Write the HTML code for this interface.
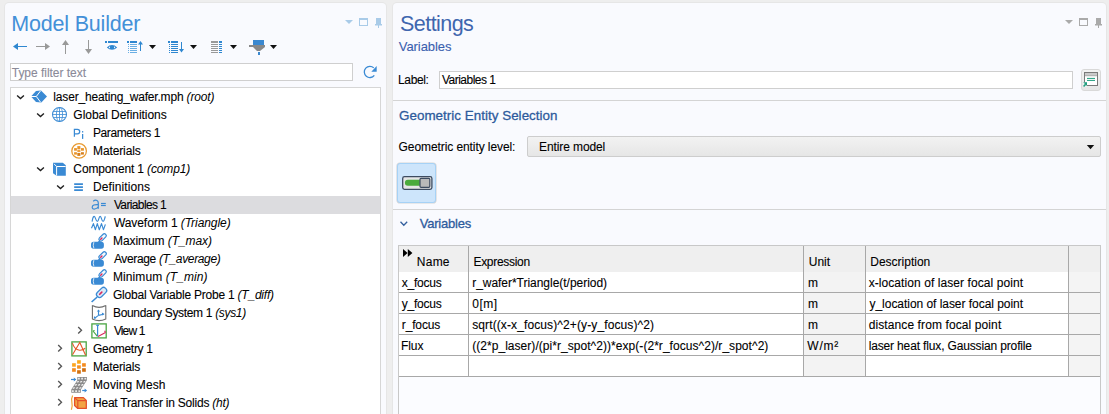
<!DOCTYPE html>
<html><head><meta charset="utf-8">
<style>
*{margin:0;padding:0;box-sizing:border-box}
html,body{width:1109px;height:414px;overflow:hidden;background:#eeeeee;font-family:"Liberation Sans",sans-serif;font-size:12px;color:#000}
.a{position:absolute}
.panel{position:absolute;background:#f9fafe;border-radius:4px 4px 0 0;box-shadow:0 0 0 1px #e6e6e6}
.t{position:absolute;white-space:nowrap;line-height:14px;-webkit-text-stroke:0.1px currentColor}
.ttl{position:absolute;white-space:nowrap;font-size:21px;line-height:24px}
svg{position:absolute;overflow:visible}
.row{position:absolute;left:0;width:369px;height:18px}
.row .t{top:2px}
.sel{background:#dcdcdf}
i{font-style:italic;-webkit-text-stroke:0}
.grid{position:absolute;background:#a6a6a6}
</style></head><body>

<!-- LEFT PANEL -->
<div class="panel" style="left:5px;top:3px;width:381px;height:420px"></div>
<!-- panel controls -->
<svg style="left:0;top:0" width="1109" height="60">
 <g fill="#a9cbe8">
  <polygon points="345,20 353,20 349,24"/>
  <path d="M359,18h9v8h-9z M360,20v5h7v-5z" fill-rule="evenodd"/>
  <rect x="376" y="18" width="5" height="6"/><rect x="375" y="24" width="7" height="1.5"/><rect x="378" y="25" width="1" height="3"/>
 </g>

 <!-- toolbar -->
 <g fill="#2f87d0" stroke="none">
  <polygon points="13,46.5 18,43 18,50"/><rect x="17" y="46" width="10" height="1"/>
 </g>
 <g fill="#999">
  <polygon points="50,46.5 45,43 45,50"/><rect x="36" y="46" width="10" height="1"/>
  <polygon points="65.5,40 62,45 69,45"/><rect x="65" y="44" width="1" height="10"/>
  <polygon points="88.5,54 85,49 92,49"/><rect x="88" y="40" width="1" height="10"/>
 </g>
 <!-- eye -->
 <g fill="#2f87d0">
  <rect x="105" y="41" width="2" height="2"/><rect x="108" y="41" width="10" height="2"/>
  <path d="M106.8,47.4 Q112,42.6 117.2,47.4 Q112,52.2 106.8,47.4z"/><g fill="#f8f9fd"><polygon points="108.6,47.4 110,46.3 110,48.5"/><polygon points="115.4,47.4 114,46.3 114,48.5"/></g>
 </g>
 <!-- list up -->
 <g fill="#2f87d0">
  <rect x="127" y="41" width="2" height="2"/><rect x="130" y="41" width="7" height="2"/>
 </g>
 <g fill="#6aaee3">
  <rect x="128" y="44" width="1" height="1"/><rect x="130" y="44" width="7" height="1"/>
  <rect x="128" y="46" width="1" height="1"/><rect x="130" y="46" width="7" height="1"/>
  <rect x="128" y="48" width="1" height="1"/><rect x="130" y="48" width="7" height="1"/>
  <rect x="128" y="50" width="1" height="1"/><rect x="130" y="50" width="7" height="1"/>
  <rect x="128" y="52" width="1" height="1"/><rect x="130" y="52" width="7" height="1"/>
 </g>
 <g fill="#2f87d0"><polygon points="140.5,41 138,44.5 143,44.5"/><rect x="140" y="44" width="1" height="7"/></g>
 <polygon points="149,45 156,45 152.5,49" fill="#111"/>
 <!-- list down -->
 <g fill="#2f87d0">
  <rect x="168" y="41" width="2" height="2"/><rect x="171" y="41" width="7" height="2"/>
  <rect x="169" y="44" width="1" height="1"/><rect x="171" y="44" width="7" height="1"/>
  <rect x="169" y="46" width="1" height="1"/><rect x="171" y="46" width="7" height="1"/>
  <rect x="169" y="48" width="1" height="1"/><rect x="171" y="48" width="7" height="1"/>
  <rect x="169" y="50" width="1" height="1"/><rect x="171" y="50" width="7" height="1"/>
  <rect x="169" y="52" width="1" height="1"/><rect x="171" y="52" width="7" height="1"/>
  <polygon points="181.5,52.5 179,49 184,49"/><rect x="181" y="42" width="1" height="8"/>
 </g>
 <polygon points="190,45 197,45 193.5,49" fill="#111"/>
 <!-- grid -->
 <g fill="#999">
  <rect x="211" y="41" width="7" height="2"/><rect x="211" y="44" width="7" height="1"/><rect x="211" y="46" width="7" height="1"/><rect x="211" y="48" width="7" height="1"/><rect x="211" y="50" width="7" height="1"/><rect x="211" y="52" width="7" height="1"/>
 </g>
 <g fill="#2f87d0">
  <rect x="219" y="41" width="3" height="2"/><rect x="219" y="44" width="3" height="1"/><rect x="219" y="46" width="3" height="1"/><rect x="219" y="48" width="3" height="1"/><rect x="219" y="50" width="3" height="1"/><rect x="219" y="52" width="3" height="1"/>
 </g>
 <polygon points="230,45 237,45 233.5,49" fill="#111"/>
 <!-- funnel -->
 <rect x="253" y="40" width="11" height="5" fill="#3a88d0"/>
 <polygon points="249,45 265,45 265,47 260,51 257,51 253,47 249,47" fill="#888"/>
 <rect x="258" y="52" width="2" height="3" fill="#3a88d0"/>
 <polygon points="270,45 277,45 273.5,49" fill="#111"/>
</svg>

<!-- filter box -->
<div class="a" style="left:10px;top:63px;width:343px;height:18px;background:#fff;border:1px solid #cfcfcf"></div>
<svg style="left:356px;top:60px" width="30" height="24" viewBox="0 0 30 24">
 <path d="M18.3,15.4 A5.6,5.6 0 1,1 17.8,7.9" fill="none" stroke="#3a8ad4" stroke-width="1.3"/>
 <polygon points="15.3,11.7 20.7,11.7 20.7,6.1" fill="#3a8ad4"/>
</svg>

<!-- tree -->
<div class="a" style="left:10px;top:87px;width:371px;height:340px;background:#fff;border:1px solid #d6d6d6;overflow:hidden">
 
</div>

<div class="a sel" style="left:11px;top:196px;width:369px;height:18px"></div>
<svg style="left:8px;top:88px" width="24" height="18" viewBox="0 0 24 18"><polyline points="9.1,7.4 12.5,10.6 15.9,7.4" fill="none" stroke="#1e1e1e" stroke-width="1.35"/></svg>
<svg style="left:28px;top:88px" width="24" height="18" viewBox="0 0 24 18"><polygon points="3,8.5 8,3 13,2.6 19,8.5 13.3,14.6 8,14.1" fill="#3a8ad4"/>
<polyline points="3,8.5 8.3,8.5 12.6,2.8" fill="none" stroke="#fff" stroke-width="1"/><line x1="8.3" y1="8.5" x2="12.6" y2="14.2" stroke="#fff" stroke-width="1"/></svg>
<svg style="left:28px;top:106px" width="24" height="18" viewBox="0 0 24 18"><polyline points="9.1,7.4 12.5,10.6 15.9,7.4" fill="none" stroke="#1e1e1e" stroke-width="1.35"/></svg>
<svg style="left:48px;top:106px" width="24" height="18" viewBox="0 0 24 18"><defs><clipPath id="gc"><circle cx="11.5" cy="8.5" r="7"/></clipPath></defs><g fill="none" stroke="#3a8ad4" stroke-width="0.8">
<circle cx="11.5" cy="8.5" r="7" stroke-width="1.05"/><g clip-path="url(#gc)"><ellipse cx="11.5" cy="8.5" rx="3.1" ry="7.2"/>
<line x1="11.5" y1="1" x2="11.5" y2="16"/><line x1="3" y1="5.5" x2="20" y2="5.5"/><line x1="3" y1="8.5" x2="20" y2="8.5"/><line x1="3" y1="11.5" x2="20" y2="11.5"/></g></g></svg>
<svg style="left:68px;top:124px" width="24" height="18" viewBox="0 0 24 18"><path d="M6.4,12.8V5.3h3a2.3,2.25 0 0,1 0,4.5h-3" fill="none" stroke="#3a8ad4" stroke-width="1.25"/>
<rect x="14" y="7.1" width="1.25" height="1.4" fill="#3a8ad4"/><rect x="14" y="10" width="1.25" height="4.9" fill="#3a8ad4"/></svg>
<svg style="left:68px;top:142px" width="24" height="18" viewBox="0 0 24 18"><circle cx="11.1" cy="8.9" r="7.3" fill="#fff" stroke="#e89a30" stroke-width="1.25"/>
<g fill="#e8942a"><rect x="9.3" y="4.1" width="3.1" height="2.9"/><rect x="6.1" y="6.1" width="2.8" height="2.6"/><rect x="13" y="6.1" width="2.9" height="2.6"/>
<rect x="9.3" y="7.6" width="3.1" height="2.4" fill="#eea040"/><rect x="6.1" y="10.2" width="2.8" height="2.4"/><rect x="13" y="10.2" width="2.9" height="2.4" fill="#d8801c"/><rect x="9.3" y="10.9" width="3.1" height="3" fill="#d8801c"/></g></svg>
<svg style="left:28px;top:160px" width="24" height="18" viewBox="0 0 24 18"><polyline points="9.1,7.4 12.5,10.6 15.9,7.4" fill="none" stroke="#1e1e1e" stroke-width="1.35"/></svg>
<svg style="left:48px;top:160px" width="24" height="18" viewBox="0 0 24 18"><polygon points="5,2.8 14.8,2.8 17.8,5.3 17.8,15.7 8.5,15.7 5,13.2" fill="#3a8ad4"/>
<path d="M6,3.8 L8.6,6.5 H17.6 M8.6,6.5 V15.6" fill="none" stroke="#fff" stroke-width="1"/></svg>
<svg style="left:48px;top:178px" width="24" height="18" viewBox="0 0 24 18"><polyline points="9.1,7.4 12.5,10.6 15.9,7.4" fill="none" stroke="#1e1e1e" stroke-width="1.35"/></svg>
<svg style="left:68px;top:178px" width="24" height="18" viewBox="0 0 24 18"><g fill="#3a8ad4"><rect x="6.1" y="5.2" width="8.9" height="1.7" rx="0.4"/><rect x="6.1" y="8.2" width="8.9" height="1.7" rx="0.4"/><rect x="6.1" y="11.2" width="8.9" height="1.7" rx="0.4"/></g></svg>
<svg style="left:88px;top:196px" width="24" height="18" viewBox="0 0 24 18"><path d="M5.2,5.2 Q7.2,3.6 9,4.5 Q10.3,5.2 10.3,7 V12.8 M10.3,8.6 Q4.3,8.2 4.2,11.2 Q4.4,13.3 6.8,13 Q9.5,12.6 10.3,10.6" fill="none" stroke="#3a8ad4" stroke-width="1.2"/>
<rect x="13" y="6.9" width="4.8" height="1.2" fill="#3a8ad4"/><rect x="13" y="8.9" width="4.8" height="1.2" fill="#3a8ad4"/></svg>
<svg style="left:88px;top:214px" width="24" height="18" viewBox="0 0 24 18"><path d="M4.1,7.6 C4.6,5 4.8,2.4 6.2,2.4 C7.6,2.4 7.6,7.4 9.4,7.4 C10.8,7.4 10.6,2.4 12.2,2.4 C13.6,2.4 13.4,7.4 15.1,7.4 C16.4,7.4 16.6,3.6 17.4,2.4" fill="none" stroke="#3a8ad4" stroke-width="1.15"/>
<polyline points="3.5,14.3 5.4,9.6 7.4,15.7 9.3,9.6 11.3,15.7 13.5,9.6 15.4,15.7 17.4,10.4" fill="none" stroke="#3a8ad4" stroke-width="1.15" stroke-linejoin="round"/></svg>
<svg style="left:88px;top:232px" width="24" height="18" viewBox="0 0 24 18"><rect x="3" y="9.8" width="12.9" height="6.9" rx="2.6" fill="#3a8ad4"/>
<path d="M5.9,10.1 Q4.6,13.2 5.9,16.4" fill="none" stroke="#e4eef8" stroke-width="0.9"/>
<line x1="9.2" y1="11.8" x2="12.2" y2="8.6" stroke="#3a8ad4" stroke-width="1.7"/>
<g transform="rotate(45 14.6 5.4)"><rect x="12.7" y="1.1" width="3.8" height="8.6" rx="1.7" fill="#f2f7fc" stroke="#3a8ad4" stroke-width="1.2"/>
<rect x="13.85" y="5.6" width="1.5" height="3.2" rx="0.75" fill="#d8265a"/></g></svg>
<svg style="left:88px;top:250px" width="24" height="18" viewBox="0 0 24 18"><rect x="3" y="9.8" width="12.9" height="6.9" rx="2.6" fill="#3a8ad4"/>
<path d="M5.9,10.1 Q4.6,13.2 5.9,16.4" fill="none" stroke="#e4eef8" stroke-width="0.9"/>
<line x1="9.2" y1="11.8" x2="12.2" y2="8.6" stroke="#3a8ad4" stroke-width="1.7"/>
<g transform="rotate(45 14.6 5.4)"><rect x="12.7" y="1.1" width="3.8" height="8.6" rx="1.7" fill="#f2f7fc" stroke="#3a8ad4" stroke-width="1.2"/>
<rect x="13.85" y="5.6" width="1.5" height="3.2" rx="0.75" fill="#d8265a"/></g></svg>
<svg style="left:88px;top:268px" width="24" height="18" viewBox="0 0 24 18"><rect x="3" y="9.8" width="12.9" height="6.9" rx="2.6" fill="#3a8ad4"/>
<path d="M5.9,10.1 Q4.6,13.2 5.9,16.4" fill="none" stroke="#e4eef8" stroke-width="0.9"/>
<line x1="9.2" y1="11.8" x2="12.2" y2="8.6" stroke="#3a8ad4" stroke-width="1.7"/>
<g transform="rotate(45 14.6 5.4)"><rect x="12.7" y="1.1" width="3.8" height="8.6" rx="1.7" fill="#f2f7fc" stroke="#3a8ad4" stroke-width="1.2"/>
<rect x="13.85" y="5.6" width="1.5" height="3.2" rx="0.75" fill="#d8265a"/></g></svg>
<svg style="left:88px;top:286px" width="24" height="18" viewBox="0 0 24 18"><g transform="rotate(45 13.4 6.6)"><rect x="10.4" y="0.6" width="6" height="11.5" rx="2.6" fill="#dbe9f7" stroke="#3a8ad4" stroke-width="1.25"/>
<rect x="12.6" y="5.2" width="1.6" height="4.6" rx="0.8" fill="#d8265a"/></g>
<line x1="3.6" y1="16" x2="9.2" y2="11" stroke="#3a8ad4" stroke-width="1.6"/></svg>
<svg style="left:88px;top:304px" width="24" height="18" viewBox="0 0 24 18"><path d="M4.4,1.2 V15 Q11,18.2 17.8,15 V1.2 M4.4,1.6 Q11,5.2 17.8,1.6" fill="none" stroke="#6e6e6e" stroke-width="1.1"/>
<g stroke="#3a8ad4" stroke-width="1.15" fill="none"><line x1="10.5" y1="6.6" x2="10.5" y2="11.4"/><polyline points="10.5,11.4 15.5,10.2"/><polyline points="10.5,11.4 6.6,14.2"/></g>
<g fill="#3a8ad4"><polygon points="10.5,5.6 8.8,7.6 12.2,7.6"/><polygon points="16.6,10 13.8,8.6 14.4,11.6"/><polygon points="5.8,14.8 6,12 8.2,14.2"/></g></svg>
<svg style="left:68px;top:322px" width="24" height="18" viewBox="0 0 24 18"><polyline points="10.2,5.1 13.5,8.3 10.2,11.5" fill="none" stroke="#555" stroke-width="1.35"/></svg>
<svg style="left:88px;top:322px" width="24" height="18" viewBox="0 0 24 18"><rect x="3.9" y="1.9" width="14.3" height="14" fill="#fff" stroke="#4aa543" stroke-width="1.3"/>
<line x1="9.6" y1="3.3" x2="9.6" y2="14.5" stroke="#3a8ad4" stroke-width="1.2"/><line x1="8.2" y1="3.3" x2="11" y2="3.3" stroke="#3a8ad4" stroke-width="1.2"/>
<line x1="10" y1="14.4" x2="17.5" y2="10.6" stroke="#d8265a" stroke-width="1.15"/><line x1="17.5" y1="10.6" x2="16.6" y2="8.8" stroke="#d8265a" stroke-width="1.1"/>
<line x1="9.2" y1="14.2" x2="5" y2="9" stroke="#4aa543" stroke-width="1.15"/><line x1="5" y1="9" x2="6.6" y2="8.4" stroke="#4aa543" stroke-width="1.1"/></svg>
<svg style="left:48px;top:340px" width="24" height="18" viewBox="0 0 24 18"><polyline points="10.2,5.1 13.5,8.3 10.2,11.5" fill="none" stroke="#555" stroke-width="1.35"/></svg>
<svg style="left:68px;top:340px" width="24" height="18" viewBox="0 0 24 18"><rect x="3.9" y="1.9" width="14.3" height="14" fill="#fff" stroke="#4aa543" stroke-width="1.3"/>
<polyline points="4.5,14.8 11.8,2.4 17.6,15.3" fill="none" stroke="#e5582a" stroke-width="1.1"/>
<path d="M4.4,3.2 Q6.5,9.8 11.5,10.2 Q15.5,10.4 17.2,8.2" fill="none" stroke="#e5582a" stroke-width="1.1"/></svg>
<svg style="left:48px;top:358px" width="24" height="18" viewBox="0 0 24 18"><polyline points="10.2,5.1 13.5,8.3 10.2,11.5" fill="none" stroke="#555" stroke-width="1.35"/></svg>
<svg style="left:68px;top:358px" width="24" height="18" viewBox="0 0 24 18"><rect x="9.1" y="2.2" width="3.7" height="3.5" fill="#fca81c"/><rect x="4.1" y="5.2" width="3.7" height="3.5" fill="#fca51e"/>
<rect x="14.1" y="5.2" width="3.7" height="3.5" fill="#f48b1e"/><rect x="9.1" y="7.3" width="3.7" height="3.4" fill="#f38f20"/>
<rect x="4.1" y="10.2" width="3.7" height="3.6" fill="#f28a1e"/><rect x="14.1" y="10.2" width="3.7" height="3.6" fill="#cf6e10"/><rect x="9.1" y="12.2" width="3.7" height="3.5" fill="#d07212"/></svg>
<svg style="left:48px;top:376px" width="24" height="18" viewBox="0 0 24 18"><polyline points="10.2,5.1 13.5,8.3 10.2,11.5" fill="none" stroke="#555" stroke-width="1.35"/></svg>
<svg style="left:68px;top:376px" width="24" height="18" viewBox="0 0 24 18"><polygon points="9.3,1.1 18.9,1.1 18.9,4.2 12.899999999999999,13.5 12.899999999999999,16.7 3.3,16.7 3.3,13.5 9.3,4.2" fill="#8a8a8a"/><polygon points="10.05,1.85 11.75,1.85 11.75,3.47 10.05,3.47" fill="#eeeeee"/><polygon points="13.25,1.85 14.95,1.85 14.95,3.47 13.25,3.47" fill="#eeeeee"/><polygon points="16.45,1.85 18.15,1.85 18.15,3.47 16.45,3.47" fill="#eeeeee"/><polygon points="9.55,4.97 11.25,4.97 10.21,6.59 8.51,6.59" fill="#eeeeee"/><polygon points="12.75,4.97 14.45,4.97 13.41,6.59 11.71,6.59" fill="#eeeeee"/><polygon points="15.95,4.97 17.65,4.97 16.61,6.59 14.91,6.59" fill="#eeeeee"/><polygon points="7.54,8.09 9.24,8.09 8.20,9.71 6.50,9.71" fill="#eeeeee"/><polygon points="10.74,8.09 12.44,8.09 11.40,9.71 9.70,9.71" fill="#eeeeee"/><polygon points="13.94,8.09 15.64,8.09 14.60,9.71 12.90,9.71" fill="#eeeeee"/><polygon points="5.53,11.21 7.23,11.21 6.18,12.83 4.48,12.83" fill="#eeeeee"/><polygon points="8.73,11.21 10.43,11.21 9.38,12.83 7.68,12.83" fill="#eeeeee"/><polygon points="11.93,11.21 13.63,11.21 12.58,12.83 10.88,12.83" fill="#eeeeee"/><polygon points="4.05,14.33 5.75,14.33 5.75,15.95 4.05,15.95" fill="#eeeeee"/><polygon points="7.25,14.33 8.95,14.33 8.95,15.95 7.25,15.95" fill="#eeeeee"/><polygon points="10.45,14.33 12.15,14.33 12.15,15.95 10.45,15.95" fill="#eeeeee"/><g fill="#3a8ad4"><rect x="3" y="2.9" width="3.6" height="1.2"/><polygon points="5.8,1.4 8.3,3.5 5.8,5.6"/><rect x="14.2" y="13.9" width="3.4" height="1.2"/><polygon points="16.6,12.4 19.1,14.5 16.6,16.6"/></g></svg>
<svg style="left:48px;top:394px" width="24" height="18" viewBox="0 0 24 18"><polyline points="10.2,5.1 13.5,8.3 10.2,11.5" fill="none" stroke="#555" stroke-width="1.35"/></svg>
<svg style="left:68px;top:394px" width="24" height="18" viewBox="0 0 24 18"><path d="M4.6,1.6 Q3,5 3.9,8.6 Q4.7,12.2 3.4,15.8" fill="none" stroke="#f0a43a" stroke-width="1.2"/>
<polygon points="6.6,3.6 15.4,3.6 18.3,6.4 18.3,14.4 9.8,14.4 6.6,11.6" fill="#f2a444" stroke="#e5502a" stroke-width="1.3" stroke-linejoin="round"/>
<path d="M6.9,3.9 L9.8,6.6 H18 M9.8,6.6 V14.2" fill="none" stroke="#e5502a" stroke-width="1.2"/></svg>
<!-- RIGHT PANEL -->
<div class="panel" style="left:393px;top:3px;width:713px;height:420px"></div>
<svg style="left:0;top:0" width="1109" height="40"> <g fill="#aaaaaa">
  <polygon points="1065,20 1073,20 1069,24"/>
  <path d="M1079,18h9v8h-9z M1080,20v5h7v-5z" fill-rule="evenodd"/>
  <rect x="1096" y="18" width="5" height="6"/><rect x="1095" y="24" width="7" height="1.5"/><rect x="1098" y="25" width="1" height="3"/>
 </g></svg>

<div class="a" style="left:439px;top:71px;width:634px;height:18px;background:#fff;border:1px solid #cfcfcf"></div>
<div class="a" style="left:1081px;top:69px;width:20px;height:22px;background:linear-gradient(#f3f3f3,#e6e6e6);border:1px solid #d9d9d9;border-radius:3px"></div>
<svg style="left:1076px;top:66px" width="30" height="28" viewBox="0 0 30 28">
 <rect x="8.5" y="6.5" width="13" height="13" fill="#fff" stroke="#7a7a7a" stroke-width="1"/>
 <rect x="9" y="7" width="12" height="2.5" fill="#c9c9c9"/><rect x="9" y="9.3" width="12" height="0.9" fill="#a0a0a0"/>
 <rect x="11" y="11.9" width="8" height="1" fill="#1f9e7e"/><rect x="11" y="13.9" width="8" height="1" fill="#1f9e7e"/>
 <rect x="7" y="16" width="4" height="5" fill="#f0f0f0"/>
 <polygon points="7.2,16.2 11,16.2 11,20" fill="#1f9e7e"/><line x1="7.6" y1="20.6" x2="9.6" y2="18.2" stroke="#1f9e7e" stroke-width="1.6"/>
</svg>

<div class="a" style="left:393px;top:100px;width:713px;height:1px;background:#d4d4d4"></div>

<div class="a" style="left:527px;top:136px;width:574px;height:21px;background:linear-gradient(#f2f2f2,#e6e6e6);border:1px solid #cdcdcd;border-radius:2px"></div>
<svg style="left:0;top:0" width="1109" height="414">
 <polygon points="1086.8,145 1094.2,145 1090.5,149.2" fill="#111"/>
</svg>

<div class="a" style="left:397px;top:163px;width:39px;height:40px;background:#cde5fb;border:1px solid #a6d2f6;border-radius:3px;box-shadow:0 0 0 0.6px #d6d6d6"></div>
<svg style="left:396px;top:162px" width="44" height="42" viewBox="0 0 44 42">
 <rect x="6.7" y="14.6" width="29.2" height="12.8" rx="1.8" fill="#e6e6e6" stroke="#3d4b60" stroke-width="1.3"/>
 <path d="M11.9,17.8 H23.9 V23.8 H11.9 A3,3 0 0,1 11.9,17.8z" fill="#4bab3c"/>
 <rect x="24" y="16.3" width="9.8" height="9" rx="1" fill="#b9b9b9" stroke="#3d4b60" stroke-width="1.2"/>
</svg>

<div class="a" style="left:393px;top:209px;width:713px;height:1px;background:#d4d4d4"></div>
<svg style="left:400px;top:221px" width="8" height="6"><polyline points="0.5,0.8 3.8,4.3 7.2,0.8" fill="none" stroke="#34609f" stroke-width="1.3"/></svg>

<!-- table -->
<div id="tbl" class="a" style="left:398px;top:245px;width:703px;height:180px;background:#fbfcff;border-left:1px solid #c8c8c8;border-top:1px solid #c8c8c8;border-right:1px solid #c8c8c8"></div>

<div class="a" style="left:399px;top:246px;width:701px;height:26px;background:#efefef"></div>
<div class="a" style="left:399px;top:272px;width:701px;height:21px;background:#fff"></div>
<div class="a" style="left:804px;top:272px;width:61px;height:21px;background:#f3f3f3"></div>
<div class="a" style="left:1069px;top:272px;width:31px;height:21px;background:#f4f4f4"></div>
<div class="a" style="left:399px;top:292px;width:701px;height:1px;background:#a8a8a8"></div>
<div class="a" style="left:399px;top:293px;width:701px;height:21px;background:#fff"></div>
<div class="a" style="left:804px;top:293px;width:61px;height:21px;background:#f3f3f3"></div>
<div class="a" style="left:1069px;top:293px;width:31px;height:21px;background:#f4f4f4"></div>
<div class="a" style="left:399px;top:313px;width:701px;height:1px;background:#a8a8a8"></div>
<div class="a" style="left:399px;top:314px;width:701px;height:21px;background:#fff"></div>
<div class="a" style="left:804px;top:314px;width:61px;height:21px;background:#f3f3f3"></div>
<div class="a" style="left:1069px;top:314px;width:31px;height:21px;background:#f4f4f4"></div>
<div class="a" style="left:399px;top:334px;width:701px;height:1px;background:#a8a8a8"></div>
<div class="a" style="left:399px;top:335px;width:701px;height:21px;background:#fff"></div>
<div class="a" style="left:804px;top:335px;width:61px;height:21px;background:#f3f3f3"></div>
<div class="a" style="left:1069px;top:335px;width:31px;height:21px;background:#f4f4f4"></div>
<div class="a" style="left:399px;top:355px;width:701px;height:1px;background:#a8a8a8"></div>
<div class="a" style="left:399px;top:356px;width:701px;height:21px;background:#fff"></div>
<div class="a" style="left:804px;top:356px;width:61px;height:21px;background:#f3f3f3"></div>
<div class="a" style="left:1069px;top:356px;width:31px;height:21px;background:#f4f4f4"></div>
<div class="a" style="left:399px;top:376px;width:701px;height:1px;background:#a8a8a8"></div>
<div class="a" style="left:468px;top:246px;width:1px;height:131px;background:#a8a8a8"></div>
<div class="a" style="left:803px;top:246px;width:1px;height:131px;background:#a8a8a8"></div>
<div class="a" style="left:865px;top:246px;width:1px;height:131px;background:#a8a8a8"></div>
<div class="a" style="left:1068px;top:246px;width:1px;height:131px;background:#a8a8a8"></div>
<svg style="left:403px;top:249px" width="10" height="8"><polygon points="0,0 4.6,4 0,8" fill="#000"/><polygon points="4.8,0 9.4,4 4.8,8" fill="#000"/></svg>
<div class="t" style="left:53.36px;top:90px;letter-spacing:-0.174px;">laser_heating_wafer.mph <i>(root)</i></div>
<div class="t" style="left:73.36px;top:108px;letter-spacing:-0.042px;">Global Definitions</div>
<div class="t" style="left:93.00px;top:126px;letter-spacing:-0.409px;">Parameters 1</div>
<div class="t" style="left:93.00px;top:144px;letter-spacing:-0.113px;">Materials</div>
<div class="t" style="left:73.36px;top:162px;letter-spacing:-0.140px;">Component 1 <i>(comp1)</i></div>
<div class="t" style="left:93.00px;top:180px;letter-spacing:0.108px;">Definitions</div>
<div class="t" style="left:113.90px;top:198px;letter-spacing:-0.630px;">Variables 1</div>
<div class="t" style="left:113.90px;top:216px;letter-spacing:-0.063px;">Waveform 1 <i>(Triangle)</i></div>
<div class="t" style="left:113.00px;top:234px;letter-spacing:-0.077px;">Maximum <i>(T_max)</i></div>
<div class="t" style="left:113.90px;top:252px;letter-spacing:-0.350px;">Average <i>(T_average)</i></div>
<div class="t" style="left:113.00px;top:270px;letter-spacing:0.090px;">Minimum <i>(T_min)</i></div>
<div class="t" style="left:113.00px;top:288px;letter-spacing:-0.221px;">Global Variable Probe 1 <i>(T_diff)</i></div>
<div class="t" style="left:113.00px;top:306px;letter-spacing:-0.329px;">Boundary System 1 <i>(sys1)</i></div>
<div class="t" style="left:113.90px;top:324px;letter-spacing:-0.864px;">View 1</div>
<div class="t" style="left:93.00px;top:342px;letter-spacing:-0.300px;">Geometry 1</div>
<div class="t" style="left:93.00px;top:360px;letter-spacing:-0.180px;">Materials</div>
<div class="t" style="left:93.00px;top:378px;letter-spacing:0.108px;">Moving Mesh</div>
<div class="t" style="left:93.00px;top:396px;letter-spacing:-0.227px;">Heat Transfer in Solids <i>(ht)</i></div>
<div class="t" style="left:401.82px;top:276px;letter-spacing:-0.240px;">x_focus</div>
<div class="t" style="left:472.18px;top:276px;letter-spacing:-0.029px;">r_wafer*Triangle(t/period)</div>
<div class="t" style="left:808.00px;top:276px;">m</div>
<div class="t" style="left:868.64px;top:276px;letter-spacing:0.078px;">x-location of laser focal point</div>
<div class="t" style="left:401.82px;top:297px;letter-spacing:-0.240px;">y_focus</div>
<div class="t" style="left:472.18px;top:297px;letter-spacing:0.540px;">0[m]</div>
<div class="t" style="left:808.00px;top:297px;">m</div>
<div class="t" style="left:869.54px;top:297px;letter-spacing:-0.042px;">y_location of laser focal point</div>
<div class="t" style="left:401.82px;top:318px;letter-spacing:-0.150px;">r_focus</div>
<div class="t" style="left:472.18px;top:318px;letter-spacing:0.113px;">sqrt((x-x_focus)^2+(y-y_focus)^2)</div>
<div class="t" style="left:808.00px;top:318px;">m</div>
<div class="t" style="left:868.64px;top:318px;letter-spacing:0.105px;">distance from focal point</div>
<div class="t" style="left:400.92px;top:339px;letter-spacing:-0.060px;">Flux</div>
<div class="t" style="left:472.18px;top:339px;letter-spacing:0.046px;">((2*p_laser)/(pi*r_spot^2))*exp(-(2*r_focus^2)/r_spot^2)</div>
<div class="t" style="left:807.36px;top:339px;letter-spacing:0.780px;">W/m&sup2;</div>
<div class="t" style="left:868.64px;top:339px;letter-spacing:-0.146px;">laser heat flux, Gaussian profile</div>
<div class="t" style="left:416.82px;top:255px;letter-spacing:0.240px;">Name</div>
<div class="t" style="left:473.46px;top:255px;letter-spacing:-0.300px;">Expression</div>
<div class="t" style="left:808.82px;top:255px;letter-spacing:-0.060px;">Unit</div>
<div class="t" style="left:870.28px;top:255px;">Description</div>
<div class="t" style="left:11.20px;top:12px;letter-spacing:-0.180px;font-size:21.5px;line-height:24px;color:#4390d8;-webkit-text-stroke:0">Model Builder</div>
<div class="t" style="left:400.08px;top:12px;letter-spacing:-0.566px;font-size:21.5px;line-height:24px;color:#3f66ae;-webkit-text-stroke:0">Settings</div>
<div class="t" style="left:11.74px;top:66px;letter-spacing:-0.024px;color:#8a8a98">Type filter text</div>
<div class="t" style="left:398.82px;top:40px;letter-spacing:-0.068px;font-size:13px;color:#3a60ae">Variables</div>
<div class="t" style="left:398.00px;top:73px;letter-spacing:-0.360px;">Label:</div>
<div class="t" style="left:442.00px;top:73px;letter-spacing:-0.522px;">Variables 1</div>
<div class="t" style="left:399.00px;top:109px;letter-spacing:0.029px;font-size:13.4px;color:#2d5a9c;-webkit-text-stroke:0.28px #2d5a9c">Geometric Entity Selection</div>
<div class="t" style="left:398.54px;top:140px;letter-spacing:-0.082px;">Geometric entity level:</div>
<div class="t" style="left:539.00px;top:140px;letter-spacing:-0.098px;">Entire model</div>
<div class="t" style="left:419.72px;top:217px;letter-spacing:-0.203px;font-size:13px;color:#2d5a9c;-webkit-text-stroke:0.28px #2d5a9c">Variables</div>
</body></html>
